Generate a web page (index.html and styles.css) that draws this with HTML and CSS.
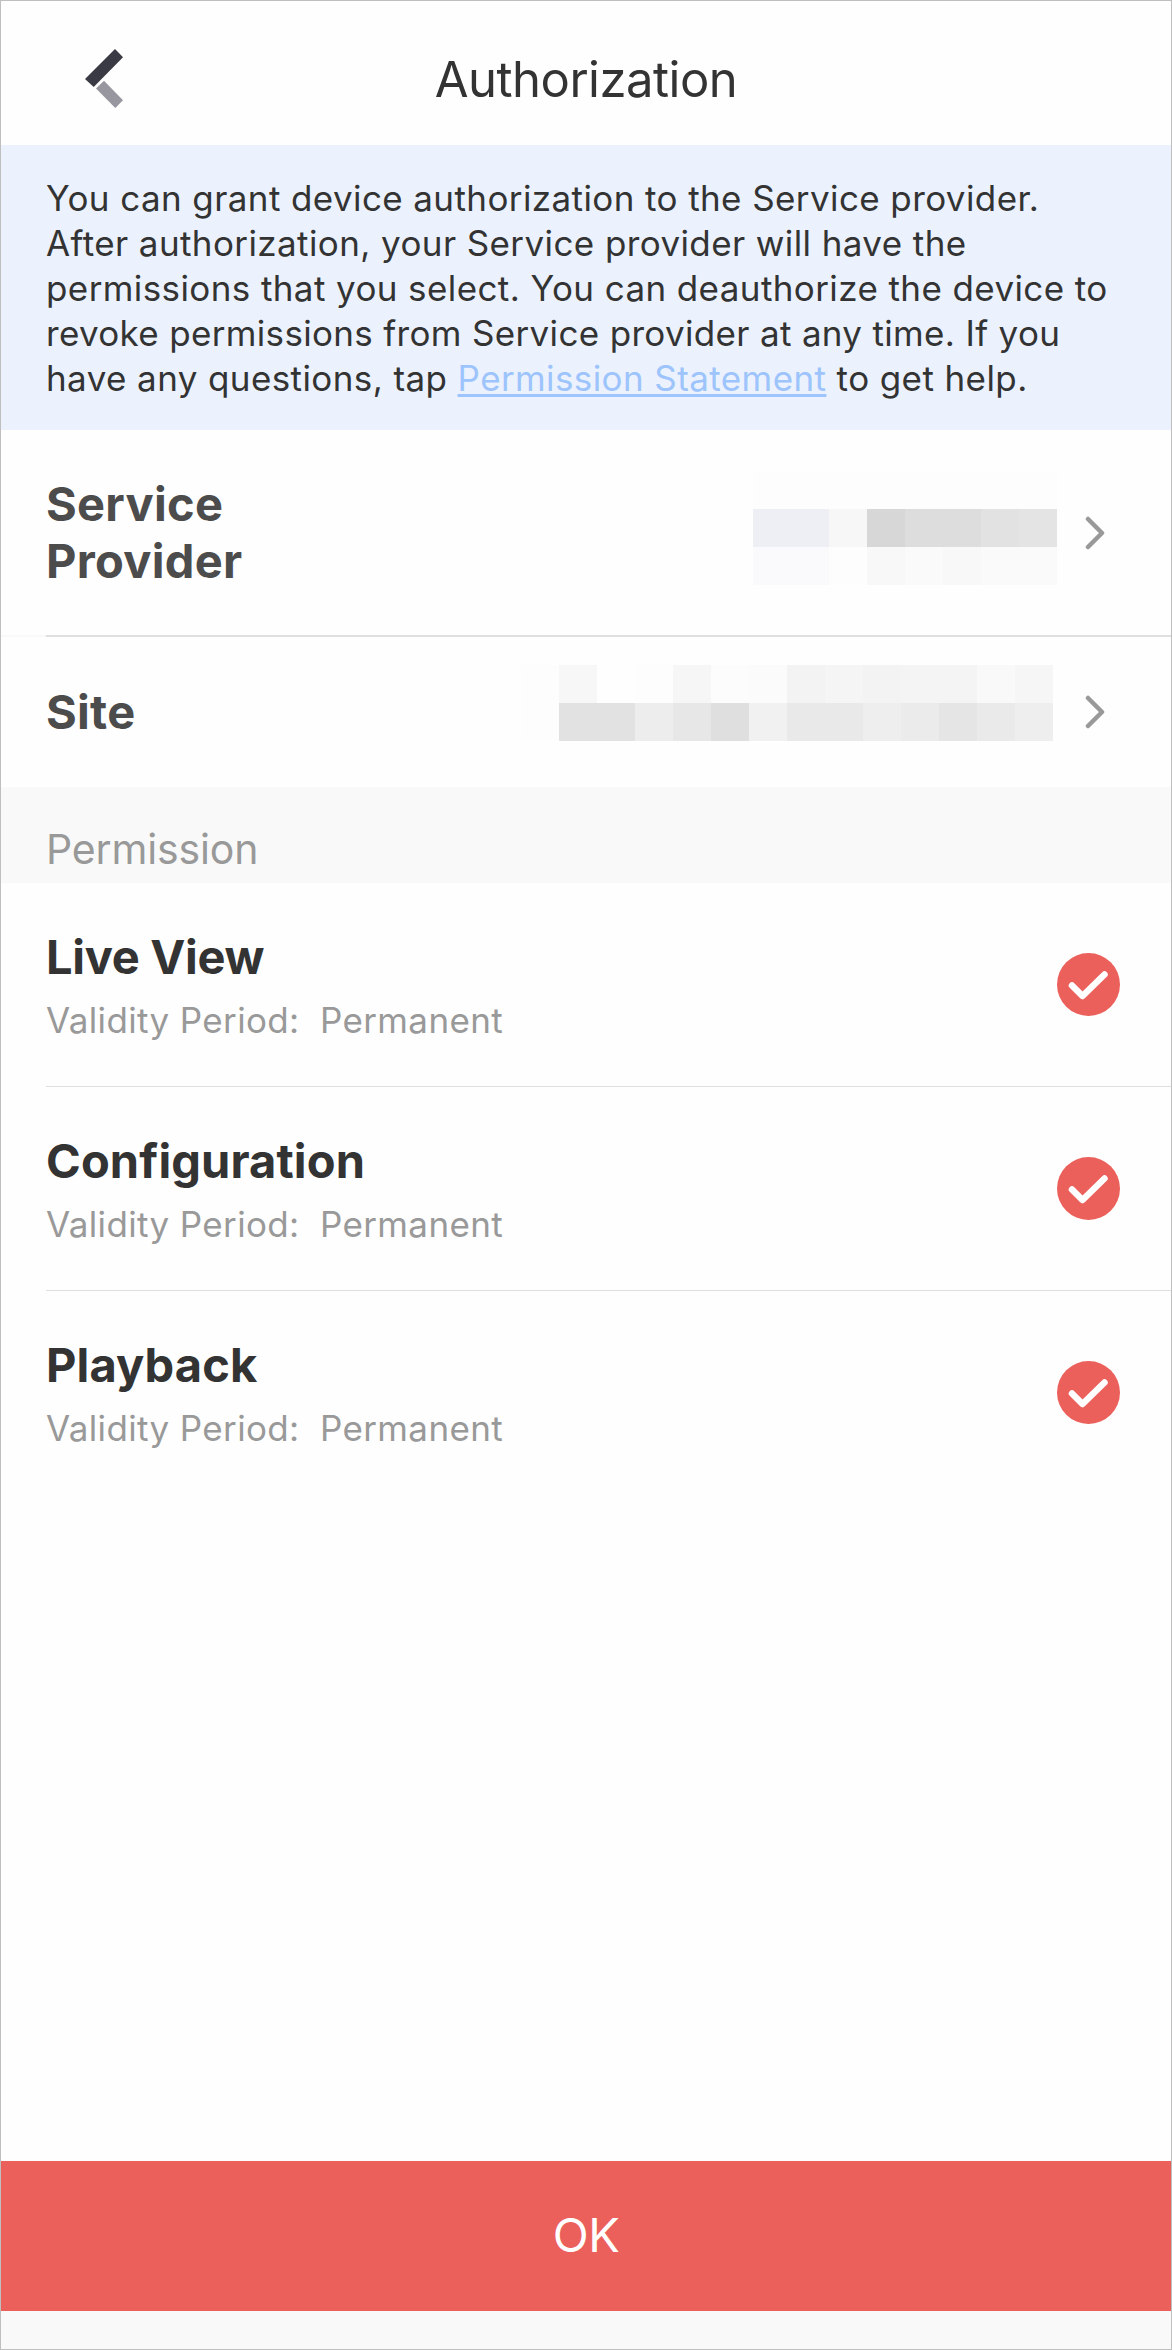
FILE: index.html
```html
<!DOCTYPE html>
<html lang="en">
<head>
	<meta charset="UTF-8">
	<title>Authorization</title>
	<link rel="stylesheet" href="styles.css">
</head>
<body>
	<div class="container">
		<header class="header">
			<svg class="back" viewBox="0 0 40 62" width="40" height="62">
				<path fill="#3a3a44" d="M31 1L39 9.300L9.700 39L1 31Z"/>
				<path fill="#98979f" d="M20 32.700L39 52.300L31.300 60L12 40.500Z"/>
			</svg>
			<h1 class="title">Authorization</h1>
		</header>
		<p class="notice">
			You can grant device authorization to the Service provider.<br>
			After authorization, your Service provider will have the<br>
			permissions that you select. You can deauthorize the device to<br>
			<span class="tight">revoke permissions from Service provider at any time. If you</span><br>
			have any questions, tap <a class="link">Permission Statement</a> to get help.
		</p>
		<div class="row provider">
			<div class="label">Service<br>Provider</div>
			<svg class="mask" viewBox="0 0 8 3" width="304" height="114" shape-rendering="crispEdges">
				<rect width="8" height="1" fill="#fdfdfd"/>
				<rect y="1" width="2" height="1" fill="#eeeef5"/>
				<rect x="2" y="1" width="1" height="1" fill="#f7f7f7"/>
				<rect x="3" y="1" width="1" height="1" fill="#d7d7d7"/>
				<rect x="4" y="1" width="2" height="1" fill="#dddddd"/>
				<rect x="6" y="1" width="1" height="1" fill="#e2e2e2"/>
				<rect x="7" y="1" width="1" height="1" fill="#e4e4e4"/>
				<rect y="2" width="2" height="1" fill="#fafafd"/>
				<rect x="2" y="2" width="1" height="1" fill="#fdfdfd"/>
				<rect x="3" y="2" width="1" height="1" fill="#f8f8f8"/>
				<rect x="4" y="2" width="1" height="1" fill="#fafafa"/>
				<rect x="5" y="2" width="1" height="1" fill="#f8f8f8"/>
				<rect x="6" y="2" width="2" height="1" fill="#fafafa"/>
			</svg>
			<svg class="arrow" viewBox="0 0 20 34" width="20" height="34"><path d="M3 3L17 17L3 31"/></svg>
		</div>
		<div class="row site">
			<div class="label">Site</div>
			<svg class="mask" viewBox="0 0 14 2" width="532" height="76" shape-rendering="crispEdges">
				<rect width="1" height="2" fill="#fdfdfd"/>
				<rect x="1" width="1" height="1" fill="#f7f7f7"/>
				<rect x="3" width="1" height="1" fill="#fdfdfd"/>
				<rect x="4" width="1" height="1" fill="#f6f6f6"/>
				<rect x="5" width="1" height="1" fill="#fcfcfc"/>
				<rect x="6" width="1" height="1" fill="#fbfbfb"/>
				<rect x="7" width="1" height="1" fill="#f3f3f3"/>
				<rect x="8" width="1" height="1" fill="#f5f5f5"/>
				<rect x="9" width="1" height="1" fill="#f3f3f3"/>
				<rect x="10" width="2" height="1" fill="#f4f4f4"/>
				<rect x="12" width="1" height="1" fill="#f9f9f9"/>
				<rect x="13" width="1" height="1" fill="#f6f6f6"/>
				<rect x="1" y="1" width="2" height="1" fill="#e2e2e2"/>
				<rect x="3" y="1" width="1" height="1" fill="#ededed"/>
				<rect x="4" y="1" width="1" height="1" fill="#e7e7e7"/>
				<rect x="5" y="1" width="1" height="1" fill="#dfdfdf"/>
				<rect x="6" y="1" width="1" height="1" fill="#f1f1f1"/>
				<rect x="7" y="1" width="2" height="1" fill="#e9e9e9"/>
				<rect x="9" y="1" width="1" height="1" fill="#eeeeee"/>
				<rect x="10" y="1" width="1" height="1" fill="#ebebeb"/>
				<rect x="11" y="1" width="1" height="1" fill="#e5e5e5"/>
				<rect x="12" y="1" width="1" height="1" fill="#eaeaea"/>
				<rect x="13" y="1" width="1" height="1" fill="#eeeeee"/>
			</svg>
			<svg class="arrow" viewBox="0 0 20 34" width="20" height="34"><path d="M3 3L17 17L3 31"/></svg>
		</div>
		<div class="section">Permission</div>
		<ul class="list">
			<li class="item">
				<div>
					<div class="name live">Live View</div>
					<div class="period">Validity Period:&nbsp; Permanent</div>
				</div>
				<svg class="check" viewBox="0 0 63 63" width="63" height="63"><circle cx="31.500" cy="31.500" r="31.500"/><path d="M15 32.500L25.500 43L47.500 21.500"/></svg>
			</li>
			<li class="item">
				<div>
					<div class="name">Configuration</div>
					<div class="period">Validity Period:&nbsp; Permanent</div>
				</div>
				<svg class="check" viewBox="0 0 63 63" width="63" height="63"><circle cx="31.500" cy="31.500" r="31.500"/><path d="M15 32.500L25.500 43L47.500 21.500"/></svg>
			</li>
			<li class="item">
				<div>
					<div class="name">Playback</div>
					<div class="period">Validity Period:&nbsp; Permanent</div>
				</div>
				<svg class="check" viewBox="0 0 63 63" width="63" height="63"><circle cx="31.500" cy="31.500" r="31.500"/><path d="M15 32.500L25.500 43L47.500 21.500"/></svg>
			</li>
		</ul>
		<button class="ok-btn">OK</button>
	</div>
</body>
</html>
```
FILE: styles.css
```css
* {
	box-sizing: border-box;
}
body {
	margin: 0;
	font-family: Inter, "Liberation Sans", sans-serif;
	color: #333;
}
.container {
	display: flex;
	flex-direction: column;
	width: 1172px;
	height: 2350px;
	padding-bottom: 38px;
	border: 1px solid #bfbfbf;
	background: linear-gradient(#fefefe, #fefefe) no-repeat 0 0 / 100% 2200px, #f9f9f9;
}

.header {
	display: grid;
	grid-template-columns: 200px 1fr 200px;
	height: 144px;
}
.back {
	margin: 47px 0 0 83px;
}
.title {
	margin: 13px 0 0;
	font-size: 49px;
	line-height: 131px;
	font-weight: 400;
	letter-spacing: -0.5px;
	text-align: center;
	white-space: nowrap;
}

.notice {
	height: 285px;
	margin: 0;
	padding: 31px 0 0 45px;
	background: #ebf2fd;
	font-size: 35px;
	line-height: 45px;
	letter-spacing: 0.4px;
	white-space: nowrap;
}
.tight {
	letter-spacing: 0.33px;
}
.link {
	color: #9dc4fc;
	text-decoration: underline;
	text-decoration-thickness: 3px;
	text-underline-offset: 3px;
	text-decoration-skip-ink: none;
}

.row {
	display: flex;
	align-items: center;
	padding: 0 66px 0 45px;
}
.provider {
	height: 207px;
	border-bottom: 2px solid;
	border-image: linear-gradient(to right, #f9f9f9 45px, #dfdfdf 45px) 0 0 2 0;
}
.site {
	height: 150px;
}
.label {
	margin-bottom: 2px;
	color: #4c4c4c;
	font-size: 47px;
	line-height: 57px;
	font-weight: 700;
	letter-spacing: 0.3px;
}
.mask {
	margin: 0 28px 9px auto;
}
.site .mask {
	margin: 0 32px 18px auto;
}
.arrow {
	fill: none;
	stroke: #999;
	stroke-width: 4.5;
	stroke-linecap: round;
	stroke-linejoin: round;
}

.section {
	height: 96px;
	padding: 37px 0 0 45px;
	background: #f9f9f9;
	color: #999;
	font-size: 41px;
	line-height: 50px;
	letter-spacing: -0.15px;
}

.list {
	flex: 1;
	margin: 0;
	padding: 0 0 0 45px;
	list-style-type: none;
}
.item {
	display: flex;
	justify-content: space-between;
	align-items: flex-start;
	height: 204px;
	padding: 44px 51px 0 0;
	border-bottom: 1px solid #dfdfdf;
}
.item:last-child {
	border-bottom: none;
}
.name {
	font-size: 47px;
	line-height: 60px;
	font-weight: 700;
	letter-spacing: 0.12px;
}
.live {
	letter-spacing: -0.3px;
}
.period {
	margin-top: 10px;
	color: #999;
	font-size: 35px;
	line-height: 46px;
	letter-spacing: 0.36px;
}
.check {
	margin-top: 26px;
	fill: #ec605c;
}
.check path {
	fill: none;
	stroke: #fff;
	stroke-width: 6.5;
	stroke-linecap: round;
	stroke-linejoin: round;
}

.ok-btn {
	height: 150px;
	padding: 0 0 2px;
	border: none;
	background: #ec605c;
	color: #fff;
	font: 400 47px/148px Inter, sans-serif;
	letter-spacing: -0.5px;
}
```
